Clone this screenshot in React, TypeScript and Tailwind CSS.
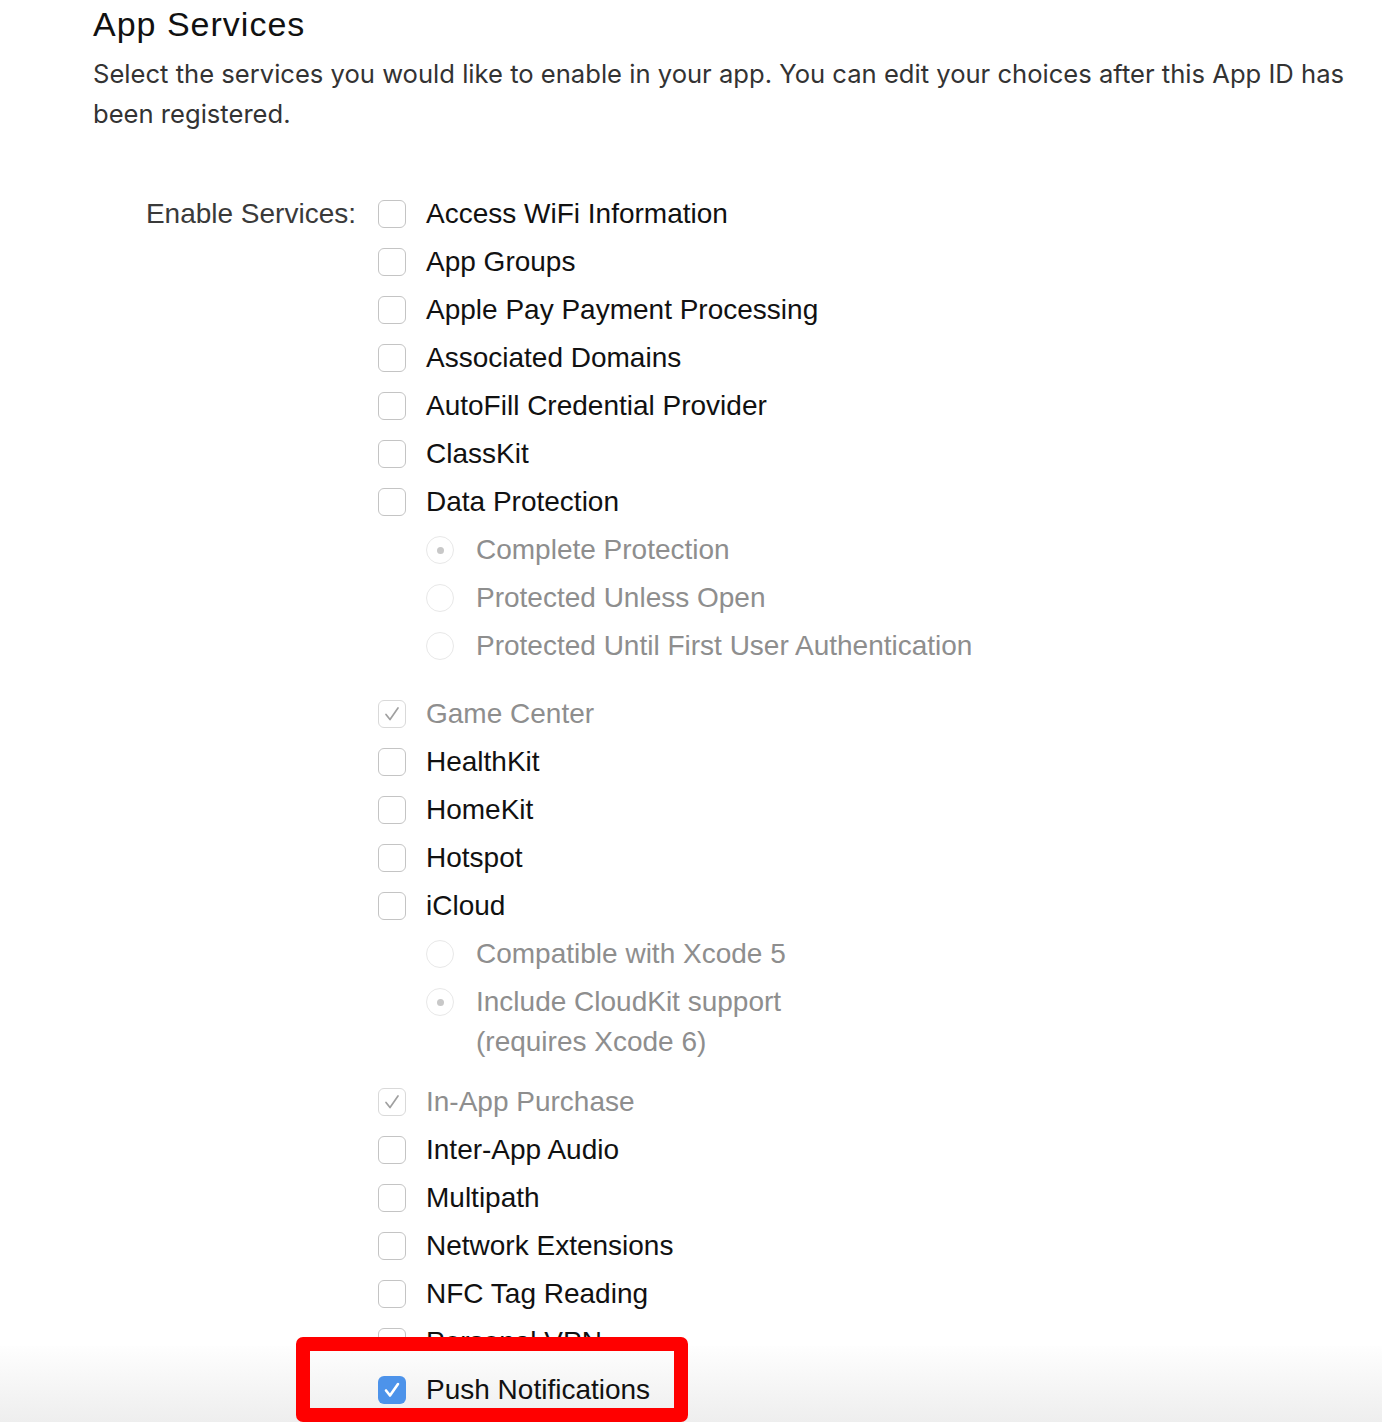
import React from 'react';

type Service = {
  name: string;
  state?: 'off' | 'locked' | 'on';
  options?: { label: React.ReactNode; selected?: boolean }[];
  gap?: string;
};

const services: Service[] = [
  { name: 'Access WiFi Information' },
  { name: 'App Groups' },
  { name: 'Apple Pay Payment Processing' },
  { name: 'Associated Domains' },
  { name: 'AutoFill Credential Provider' },
  { name: 'ClassKit' },
  {
    name: 'Data Protection',
    gap: 'mb-[20px]',
    options: [
      { label: 'Complete Protection', selected: true },
      { label: 'Protected Unless Open' },
      { label: 'Protected Until First User Authentication' },
    ],
  },
  { name: 'Game Center', state: 'locked' },
  { name: 'HealthKit' },
  { name: 'HomeKit' },
  { name: 'Hotspot' },
  {
    name: 'iCloud',
    gap: 'mb-[12px]',
    options: [
      { label: 'Compatible with Xcode 5' },
      {
        label: (
          <>
            Include CloudKit support
            <br />
            (requires Xcode 6)
          </>
        ),
        selected: true,
      },
    ],
  },
  { name: 'In-App Purchase', state: 'locked' },
  { name: 'Inter-App Audio' },
  { name: 'Multipath' },
  { name: 'Network Extensions' },
  { name: 'NFC Tag Reading' },
  { name: 'Personal VPN' },
  { name: 'Push Notifications', state: 'on' },
];

const Check = ({ color, width }: { color: string; width: number }) => (
  <svg width="22" height="22" viewBox="0 0 22 22" fill="none">
    <path d="M5 11.5 L9 16.5 L17 5" stroke={color} strokeWidth={width} strokeLinecap="round" strokeLinejoin="round" />
  </svg>
);

const Checkbox = ({ state }: { state: 'off' | 'locked' | 'on' }) => {
  if (state === 'on') {
    return (
      <div className="w-[28px] h-[28px] rounded-[6px] bg-[#4d93ea] flex items-center justify-center shrink-0">
        <Check color="#ffffff" width={2.6} />
      </div>
    );
  }
  return (
    <div
      className={
        state === 'locked'
          ? 'w-[28px] h-[28px] rounded-[6px] border border-[#d9d9d9] bg-white flex items-center justify-center shrink-0'
          : 'w-[28px] h-[28px] rounded-[6px] border border-[#c4c4c4] bg-white shrink-0'
      }
    >
      {state === 'locked' && <Check color="#a0a0a0" width={1.7} />}
    </div>
  );
};

const Radio = ({ selected }: { selected?: boolean }) => (
  <div className="w-[28px] h-[28px] rounded-full border border-[#e8e8e8] bg-white flex items-center justify-center shrink-0">
    {selected && <div className="w-[7px] h-[7px] rounded-full bg-[#c8c8c8]" />}
  </div>
);

export default function App() {
  return (
    <div className="relative w-full h-[1426px] overflow-hidden bg-white">
      <div className="pl-[93px] pr-[20px]">
        <h1 className="text-[34px] leading-[48px] tracking-[1px] text-[#111] font-['Helvetica_Neue','Liberation_Sans',Arial,sans-serif]">
          App Services
        </h1>
        <p className="mt-[6px] text-[25.6px] leading-[40px] text-[#333] font-['Inter','Liberation_Sans',sans-serif]">
          Select the services you would like to enable in your app. You can edit your choices after this App ID has been registered.
        </p>

        <div className="mt-[56px] flex font-['Helvetica_Neue','Liberation_Sans',Arial,sans-serif] text-[28px]">
          <div className="w-[263px] text-right text-[#3a3a3a] leading-[48px]">Enable Services:</div>
          <div className="ml-[22px] flex flex-col">
            {services.map((s) => {
              const state = s.state ?? 'off';
              return (
                <div key={s.name} className={s.options ? s.gap : ''}>
                  <div className={state === 'on' ? 'relative z-20 flex items-center h-[48px]' : 'flex items-center h-[48px]'}>
                    <Checkbox state={state} />
                    <span className={state === 'locked' ? 'ml-[20px] text-[#8e8e8e]' : 'ml-[20px] text-[#111]'}>{s.name}</span>
                  </div>
                  {s.options && (
                    <div className="pl-[48px] flex flex-col">
                      {s.options.map((o, i) => (
                        <div key={i} className="flex items-start py-[4px]">
                          <div className="h-[40px] flex items-center">
                            <Radio selected={o.selected} />
                          </div>
                          <span className="ml-[22px] leading-[40px] text-[#8e8e8e]">{o.label}</span>
                        </div>
                      ))}
                    </div>
                  )}
                </div>
              );
            })}
          </div>
        </div>
      </div>

      {/* browser bottom bar */}
      <div className="absolute left-0 right-0 top-[1346px] h-[76px] z-10 bg-gradient-to-b from-[#fefefe] to-[#eeeeee]" />

      {/* highlight */}
      <div className="absolute left-[296px] top-[1337px] w-[392px] h-[85px] z-30 border-[14px] border-[#ff0000] rounded-[7px]" />
    </div>
  );
}
